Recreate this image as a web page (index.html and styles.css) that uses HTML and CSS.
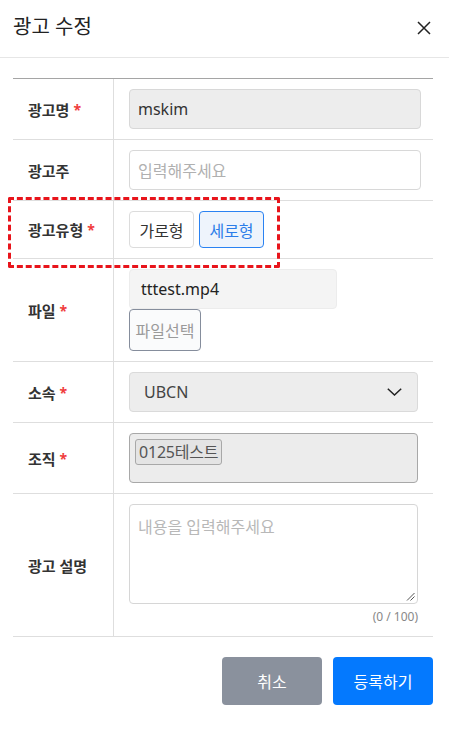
FILE: index.html
```html
<!DOCTYPE html>
<html lang="ko">
<head>
<meta charset="utf-8">
<title>광고 수정</title>
<link rel="stylesheet" href="styles.css">
</head>
<body>
<div class="modal">
  <header class="modal-header">
    <h1 class="modal-title">광고 수정</h1>
    <button class="close-btn" aria-label="닫기">
      <svg width="14" height="14" viewBox="0 0 14 14"><path d="M1 1L13 13M13 1L1 13" stroke="#222" stroke-width="1.5" fill="none"/></svg>
    </button>
  </header>
  <div class="modal-body">
    <div class="form-table">
      <div class="row">
        <div class="label">광고명 <span class="req">*</span></div>
        <div class="value"><div class="input readonly">mskim</div></div>
      </div>
      <div class="row">
        <div class="label">광고주</div>
        <div class="value"><div class="input placeholder">입력해주세요</div></div>
      </div>
      <div class="row highlight">
        <div class="label">광고유형 <span class="req">*</span></div>
        <div class="value">
          <div class="toggle-group">
            <button class="toggle">가로형</button>
            <button class="toggle active">세로형</button>
          </div>
        </div>
      </div>
      <div class="row">
        <div class="label">파일 <span class="req">*</span></div>
        <div class="value">
          <div class="file-name">tttest.mp4</div>
          <button class="file-btn">파일선택</button>
        </div>
      </div>
      <div class="row">
        <div class="label">소속 <span class="req">*</span></div>
        <div class="value">
          <div class="select">
            <span>UBCN</span>
            <svg width="15" height="8" viewBox="0 0 15 8"><path d="M0.8 0.8L7.5 7L14.2 0.8" stroke="#222" stroke-width="1.5" fill="none"/></svg>
          </div>
        </div>
      </div>
      <div class="row">
        <div class="label">조직 <span class="req">*</span></div>
        <div class="value">
          <div class="tag-box"><span class="tag">0125테스트</span></div>
        </div>
      </div>
      <div class="row">
        <div class="label">광고 설명</div>
        <div class="value">
          <div class="textarea">
            <span class="placeholder-text">내용을 입력해주세요</span>
            <svg class="grip" width="9" height="9" viewBox="0 0 9 9"><path d="M8.5 1L1 8.5M8.5 4.5L4.5 8.5" stroke="#555" stroke-width="1" fill="none"/></svg>
          </div>
          <div class="counter">(0 / 100)</div>
        </div>
      </div>
    </div>
    <div class="actions">
      <button class="btn btn-cancel">취소</button>
      <button class="btn btn-primary">등록하기</button>
    </div>
  </div>
</div>
</body>
</html>
```

FILE: styles.css
```css
* { box-sizing: border-box; }
html, body { margin: 0; padding: 0; background: #fff; }
body {
  font-family: "Noto Sans", "Noto Sans CJK KR", sans-serif;
  color: #222;
  width: 449px;
}
button { font-family: inherit; cursor: pointer; }

.modal-header {
  height: 58px;
  border-bottom: 1px solid #e6e6e6;
  display: flex;
  align-items: center;
  justify-content: space-between;
  padding: 0 18px 4px 13px;
}
.modal-title {
  margin: 0;
  font-size: 20px;
  font-weight: 400;
  color: #222;
  line-height: 28px;
}
.close-btn {
  border: 0;
  background: none;
  padding: 0;
  width: 14px;
  height: 14px;
  display: flex;
  margin-top: 3px;
}

.modal-body { padding: 20px 16px 0 13px; }

.form-table {
  border-top: 1px solid #a5a5a5;
  width: 420px;
}
.row {
  display: grid;
  grid-template-columns: 101px 1fr;
  border-bottom: 1px solid #dedede;
  position: relative;
}
.row.highlight::after {
  content: "";
  position: absolute;
  left: -5px;
  top: -4px;
  width: 266px;
  height: 65px;
  border: 3px dashed #e8141b;
  border-radius: 2px;
  pointer-events: none;
}
.label {
  border-right: 1px solid #dedede;
  padding-left: 15px;
  display: flex;
  align-items: center;
  gap: 4px;
  font-size: 15px;
  font-weight: 700;
  color: #333;
}
.req { color: #f03c3c; font-size: 14px; }
.value { padding: 10px 12px 10px 15px; }

.input {
  height: 40px;
  width: 292px;
  border: 1px solid #d8d8d8;
  border-radius: 4px;
  padding: 0 8px;
  display: flex;
  align-items: center;
  font-size: 16px;
}
.input.readonly { background: #ededed; color: #333; }
.input.placeholder { background: #fff; color: #b0b0b0; }

.toggle-group { display: flex; gap: 5px; }
.toggle {
  height: 37px;
  width: 65px;
  border: 1px solid #dcdcdc;
  border-radius: 4px;
  background: #fff;
  font-size: 16px;
  color: #333;
  padding: 0;
}
.toggle.active {
  border-color: #2a82f2;
  background: #eef4fc;
  color: #2b7de9;
}

.file-name {
  width: 208px;
  height: 40px;
  background: #f4f4f4;
  border: 1px solid #ececec;
  border-radius: 4px;
  padding: 0 11px;
  display: flex;
  align-items: center;
  font-size: 16px;
  color: #222;
}
.file-btn {
  display: block;
  height: 42px;
  width: 72px;
  border: 1px solid #858d9c;
  border-radius: 4px;
  background: #fafbfc;
  color: #9a9a9a;
  font-size: 16px;
  padding: 0;
}

.select {
  width: 289px;
  height: 40px;
  background: #ededed;
  border: 1px solid #dadada;
  border-radius: 4px;
  padding: 0 15px 0 14px;
  display: flex;
  align-items: center;
  justify-content: space-between;
  font-size: 16px;
  color: #444;
}

.tag-box {
  width: 289px;
  height: 50px;
  background: #ececec;
  border: 1px solid #a8a8a8;
  border-radius: 4px;
  padding: 5px;
}
.tag {
  display: inline-block;
  height: 26px;
  line-height: 24px;
  border: 1px solid #a8a8a8;
  border-radius: 3px;
  background: #e4e4e4;
  padding: 0 3px;
  font-size: 16px;
  letter-spacing: -0.2px;
  color: #555;
}

.textarea {
  position: relative;
  width: 289px;
  height: 100px;
  border: 1px solid #d6d6d6;
  border-radius: 4px;
  padding: 9px 8px;
  font-size: 16px;
  line-height: 26px;
}
.placeholder-text { color: #b8b8b8; }
.grip { position: absolute; right: 2px; bottom: 2px; }
.counter {
  width: 289px;
  text-align: right;
  font-size: 12px;
  color: #888;
  margin-top: 4px;
  line-height: 18px;
}

.actions {
  display: flex;
  justify-content: flex-end;
  gap: 11px;
  margin-top: 20px;
  width: 420px;
}
.btn {
  width: 100px;
  height: 48px;
  border: 0;
  border-radius: 4px;
  color: #fff;
  font-size: 16px;
}
.btn-cancel { background: #8a919d; }
.btn-primary { background: #0479fe; }
```
